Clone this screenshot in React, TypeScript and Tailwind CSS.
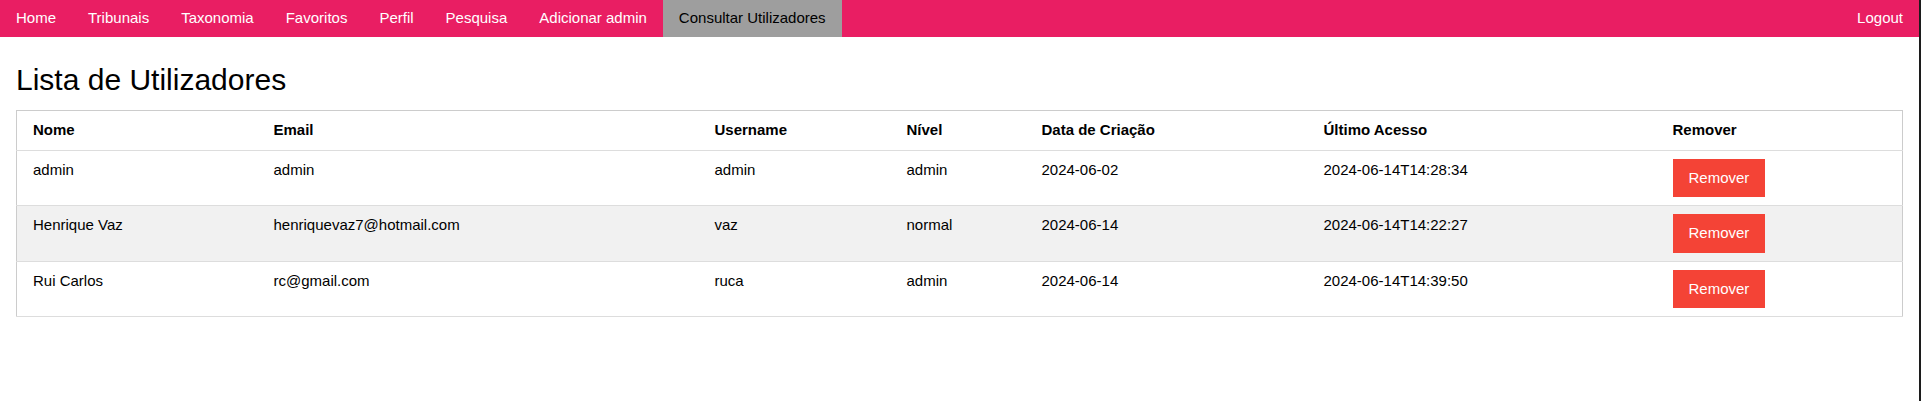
const links = ["Home", "Tribunais", "Taxonomia", "Favoritos", "Perfil", "Pesquisa", "Adicionar admin"];

const users = [
  { nome: "admin", email: "admin", username: "admin", nivel: "admin", criacao: "2024-06-02", acesso: "2024-06-14T14:28:34" },
  { nome: "Henrique Vaz", email: "henriquevaz7@hotmail.com", username: "vaz", nivel: "normal", criacao: "2024-06-14", acesso: "2024-06-14T14:22:27" },
  { nome: "Rui Carlos", email: "rc@gmail.com", username: "ruca", nivel: "admin", criacao: "2024-06-14", acesso: "2024-06-14T14:39:50" },
];

const headers = ["Nome", "Email", "Username", "Nível", "Data de Criação", "Último Acesso", "Remover"];
const widths = ["w-[249px]", "w-[441px]", "w-[192px]", "w-[135px]", "w-[282px]", "w-[349px]", "w-auto"];

export default function App() {
  return (
    <div className="flex h-[401px] w-full bg-white text-[15px] leading-[1.5] text-black" style={{ fontFamily: '"Liberation Sans", Arial, sans-serif' }}>
      <div className="flex-1 min-w-0">
        <nav className="flex h-[37px] items-center bg-[#e91e63] text-white">
          {links.map((l) => (
            <a key={l} className="flex h-full items-center px-4 cursor-pointer">{l}</a>
          ))}
          <a className="flex h-full items-center px-4 bg-[#9e9e9e] text-black">Consultar Utilizadores</a>
          <a className="ml-auto flex h-full items-center px-4">Logout</a>
        </nav>

        <div className="px-4">
          <h2 className="mt-[20px] mb-[8px] text-[30px] leading-[45px] font-normal">Lista de Utilizadores</h2>
          <table className="w-full table-fixed border-collapse border border-[#ccc]">
            <colgroup>
              {widths.map((w, i) => (
                <col key={i} className={w} />
              ))}
            </colgroup>
            <thead>
              <tr className="border-b border-[#ddd]">
                {headers.map((h, i) => (
                  <th key={h} className={`text-left font-bold align-top py-2 ${i === 0 ? "pl-4 pr-2" : "px-2"}`}>{h}</th>
                ))}
              </tr>
            </thead>
            <tbody>
              {users.map((u, r) => (
                <tr key={u.username} className={`border-b border-[#ddd] ${r === 1 ? "bg-[#f1f1f1]" : "bg-white"}`}>
                  <td className="pl-4 pr-2 py-2 align-top">{u.nome}</td>
                  <td className="px-2 py-2 align-top">{u.email}</td>
                  <td className="px-2 py-2 align-top">{u.username}</td>
                  <td className="px-2 py-2 align-top">{u.nivel}</td>
                  <td className="px-2 py-2 align-top">{u.criacao}</td>
                  <td className="px-2 py-2 align-top">{u.acesso}</td>
                  <td className="px-2 py-2 align-top">
                    <button className="inline-block bg-[#f44336] text-white px-4 py-2 leading-[1.5]">Remover</button>
                  </td>
                </tr>
              ))}
            </tbody>
          </table>
        </div>
      </div>
      <div className="w-[2px] shrink-0 bg-[#1c1c1c]" />
    </div>
  );
}
